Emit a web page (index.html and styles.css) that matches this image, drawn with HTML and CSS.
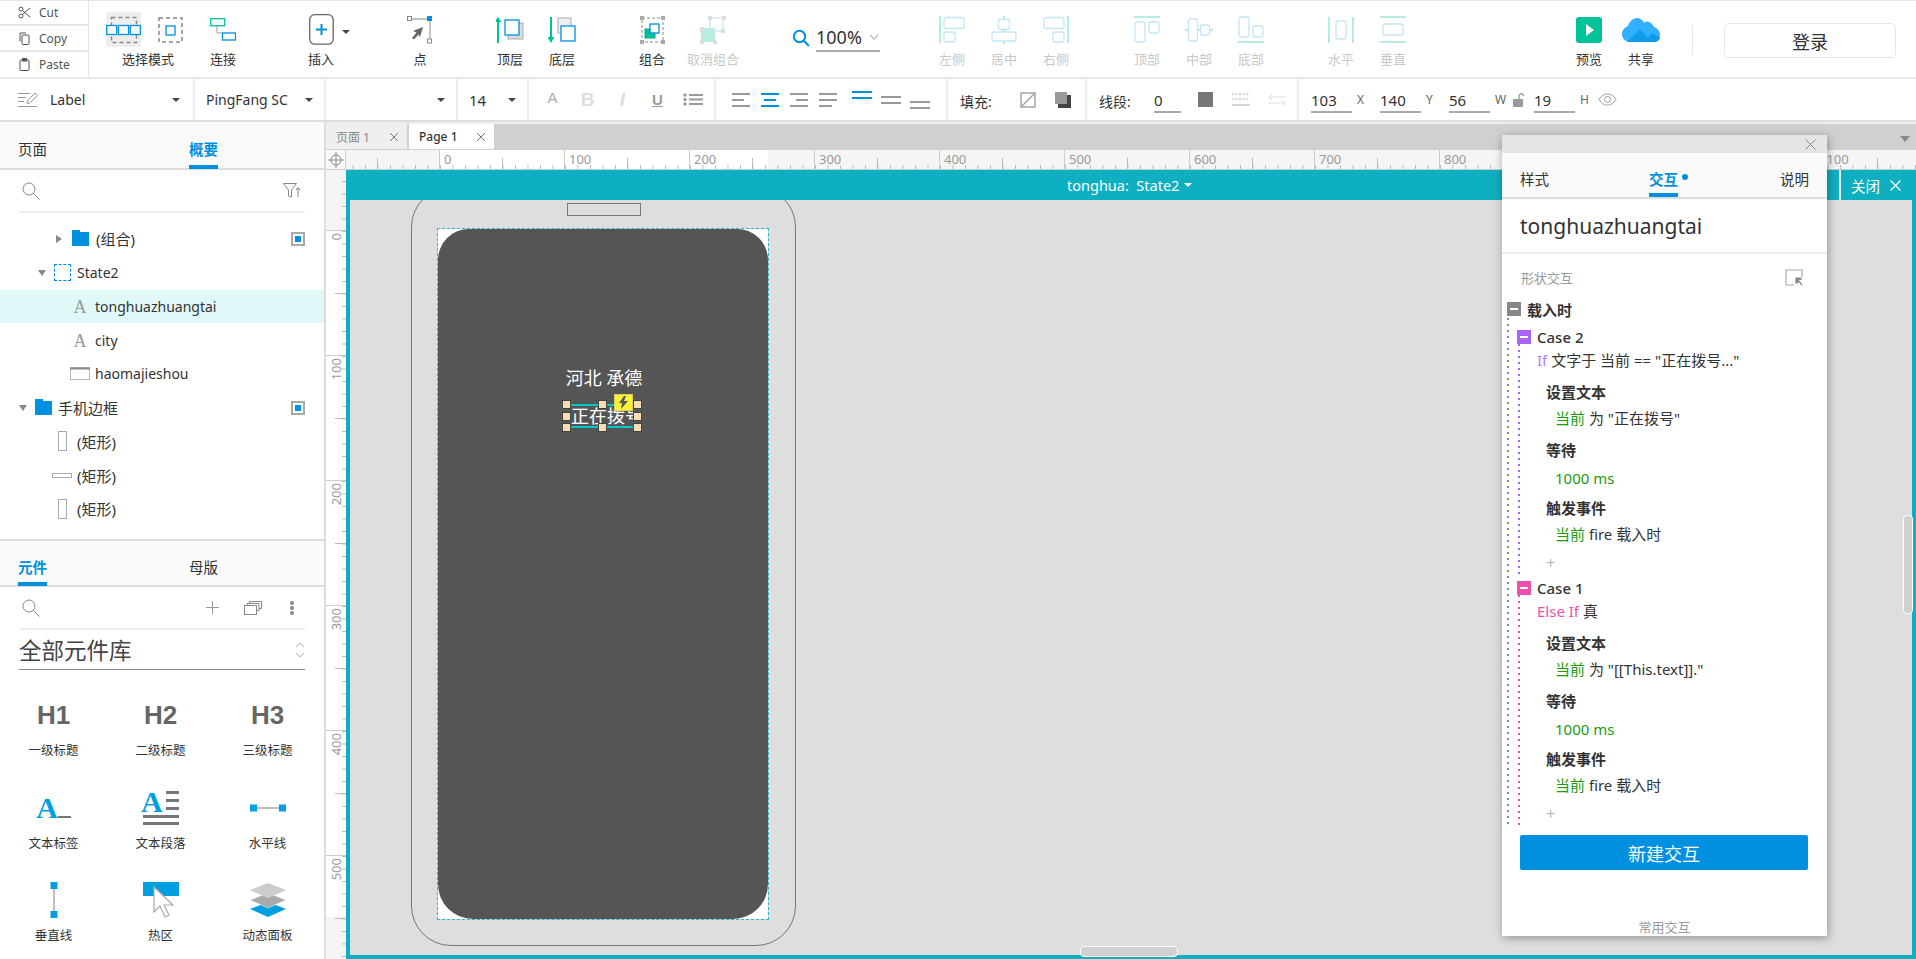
FILE: index.html
```html
<!DOCTYPE html>
<html lang="zh-CN">
<head>
    <meta charset="UTF-8">
    <title>Axure</title>
    <link rel="stylesheet" href="styles.css">
</head>
<body>
    <header class="topbar">
        <div class="clip">
            <div class="clip-row">
                <svg width="13" height="13" viewBox="0 0 13 13" fill="none" stroke="#555"><circle cx="3" cy="3" r="2"/><circle cx="3" cy="10" r="2"/><path d="M4.500 4.500L12 11M4.500 8.500L12 2"/></svg>
                <span>Cut</span>
            </div>
            <div class="clip-row">
                <svg width="13" height="13" viewBox="0 0 13 13" fill="none" stroke="#555"><rect x="4" y="3" width="7" height="9.500" rx="1"/><path d="M2 9.500V1h6"/></svg>
                <span>Copy</span>
            </div>
            <div class="clip-row">
                <svg width="13" height="13" viewBox="0 0 13 13" fill="none" stroke="#555"><rect x="2" y="2" width="9" height="10.500" rx="1"/><rect x="4.500" y="0.500" width="4" height="2.500" fill="#555"/></svg>
                <span>Paste</span>
            </div>
        </div>

        <div class="tool tool-select">
            <div class="tool-icon select-icons">
                <span class="select-on">
                    <svg width="35" height="35" viewBox="0 0 35 35" fill="none"><rect x="5.500" y="5.500" width="25" height="25" stroke="#888" stroke-width="1.500" stroke-dasharray="4 3"/><g fill="#fff" stroke="#0090e0" stroke-width="1.300"><rect x="0.700" y="13.500" width="10" height="9"/><rect x="12.500" y="13.500" width="10" height="9"/><rect x="24.300" y="13.500" width="10" height="9"/></g></svg>
                </span>
                <svg width="25" height="26" viewBox="0 0 25 26" fill="none"><rect x="1" y="1" width="23" height="24" stroke="#888" stroke-width="1.500" stroke-dasharray="4 3"/><rect x="8" y="9" width="9" height="9" stroke="#0090e0" stroke-width="1.300"/></svg>
            </div>
            <span class="tool-label">选择模式</span>
        </div>
        <div class="tool">
            <div class="tool-icon">
                <svg width="26" height="23" viewBox="0 0 26 23" fill="none"><path d="M7 8v7h6" stroke="#999"/><rect x="0.700" y="0.700" width="14" height="7" stroke="#00c39a" stroke-width="1.300"/><rect x="12.500" y="15" width="13" height="7" stroke="#0090e0" stroke-width="1.300"/></svg>
            </div>
            <span class="tool-label">连接</span>
        </div>
        <div class="tool gap-46">
            <div class="tool-icon insert-icon">
                <svg width="25" height="31" viewBox="0 0 25 31" fill="none"><rect x="0.700" y="0.700" width="23.500" height="29.500" rx="5" stroke="#666" stroke-width="1.300"/><path d="M12.500 10v11M7 15.500h11" stroke="#0090e0" stroke-width="2"/></svg>
                <i class="caret insert-caret"></i>
            </div>
            <span class="tool-label">插入</span>
        </div>
        <div class="tool gap-47">
            <div class="tool-icon">
                <svg width="26" height="28" viewBox="0 0 26 28" fill="none"><path d="M3 3h20v22" stroke="#888"/><rect x="0.500" y="0.500" width="4" height="4" fill="#fff" stroke="#888"/><rect x="20" y="0" width="5" height="5" fill="#0090e0"/><rect x="20.500" y="23" width="4" height="4" fill="#fff" stroke="#888"/><path d="M16 11l-10 4 3.500 1.500L5 22l2 1.500 4.500-5L13 21z" fill="#666"/></svg>
            </div>
            <span class="tool-label">点</span>
        </div>
        <div class="tool gap-38">
            <div class="tool-icon">
                <svg width="28" height="26" viewBox="0 0 28 26" fill="none"><path d="M2 26V4" stroke="#00c39a" stroke-width="2"/><path d="M2 0l3.500 5h-7z" fill="#00c39a"/><rect x="12" y="6" width="15" height="16" fill="#ddd" stroke="#aaa"/><rect x="9" y="3" width="14" height="15" fill="#fff" stroke="#0090e0" stroke-width="1.300"/></svg>
            </div>
            <span class="tool-label">顶层</span>
        </div>
        <div class="tool">
            <div class="tool-icon">
                <svg width="28" height="26" viewBox="0 0 28 26" fill="none"><path d="M3 0v20" stroke="#00c39a" stroke-width="2"/><path d="M3 26l3.500-6h-7z" fill="#00c39a"/><rect x="10" y="1" width="13" height="15" fill="#eee" stroke="#aaa"/><rect x="13" y="9" width="14" height="15" fill="#fff" stroke="#0090e0" stroke-width="1.300"/></svg>
            </div>
            <span class="tool-label">底层</span>
        </div>
        <div class="tool gap-38">
            <div class="tool-icon">
                <svg width="25" height="28" viewBox="0 0 25 28" fill="none"><rect x="2" y="2" width="21" height="24" stroke="#888" stroke-dasharray="3 2"/><g fill="#aaa"><rect x="0" y="0" width="4" height="4"/><rect x="21" y="0" width="4" height="4"/><rect x="0" y="24" width="4" height="4"/><rect x="21" y="24" width="4" height="4"/></g><rect x="5" y="13" width="10" height="9" fill="#00c39a" stroke="#0a8"/><rect x="10" y="8" width="9" height="9" fill="#fff" stroke="#0090e0" stroke-width="1.300"/></svg>
            </div>
            <span class="tool-label">组合</span>
        </div>
        <div class="tool tool-wide">
            <div class="tool-icon">
                <svg width="26" height="28" viewBox="0 0 26 28" fill="none"><rect x="1" y="12" width="14" height="14" fill="#b9ece0"/><rect x="10" y="2" width="13" height="13" stroke="#c5e6f8" stroke-width="1.300"/><g fill="#ddd"><rect x="8" y="0" width="4" height="4"/><rect x="22" y="0" width="4" height="4"/><rect x="0" y="11" width="4" height="4"/><rect x="21" y="13" width="4" height="4"/><rect x="0" y="24" width="4" height="4"/><rect x="13" y="24" width="4" height="4"/></g></svg>
            </div>
            <span class="tool-label tool-off">取消组合</span>
        </div>
        <div class="zoom-box">
            <svg width="18" height="18" viewBox="0 0 18 18" fill="none" stroke="#0090e0" stroke-width="2"><circle cx="7.500" cy="7.500" r="5.700"/><path d="M11.500 11.500l5.500 5.500"/></svg>
            <div class="zoom-val">
                <span>100%</span>
                <svg width="10" height="6" viewBox="0 0 10 6" fill="none" stroke="#bbb" stroke-width="1.300"><path d="M1 1l4 4 4-4"/></svg>
            </div>
        </div>
        <div class="tool gap-46">
            <div class="tool-icon"><svg width="26" height="27" viewBox="0 0 26 27" fill="none"><path d="M1 0v27" stroke="#b9ece0" stroke-width="2"/><g stroke="#c5e6f8" stroke-width="1.300"><rect x="5" y="1.500" width="20" height="11" rx="2"/><rect x="5" y="16" width="11" height="10" rx="2"/></g></svg></div>
            <span class="tool-label tool-off">左侧</span>
        </div>
        <div class="tool">
            <div class="tool-icon"><svg width="26" height="28" viewBox="0 0 26 28" fill="none"><path d="M13 0v28" stroke="#b9ece0" stroke-width="2"/><g fill="#fff" stroke="#c5e6f8" stroke-width="1.300"><rect x="7.500" y="3.500" width="11" height="10" rx="2"/><rect x="1" y="16" width="24" height="9" rx="2"/></g></svg></div>
            <span class="tool-label tool-off">居中</span>
        </div>
        <div class="tool">
            <div class="tool-icon"><svg width="26" height="27" viewBox="0 0 26 27" fill="none"><path d="M25 0v27" stroke="#b9ece0" stroke-width="2"/><g stroke="#c5e6f8" stroke-width="1.300"><rect x="1" y="1.500" width="20" height="11" rx="2"/><rect x="10" y="16" width="11" height="10" rx="2"/></g></svg></div>
            <span class="tool-label tool-off">右侧</span>
        </div>
        <div class="tool gap-39">
            <div class="tool-icon"><svg width="26" height="27" viewBox="0 0 26 27" fill="none"><path d="M0 1h26" stroke="#b9ece0" stroke-width="2"/><g stroke="#c5e6f8" stroke-width="1.300"><rect x="1" y="6" width="10" height="20" rx="2"/><rect x="15" y="6" width="10" height="11" rx="2"/></g></svg></div>
            <span class="tool-label tool-off">顶部</span>
        </div>
        <div class="tool">
            <div class="tool-icon"><svg width="28" height="26" viewBox="0 0 28 26" fill="none"><path d="M0 13h28" stroke="#b9ece0" stroke-width="2"/><g fill="#fff" stroke="#c5e6f8" stroke-width="1.300"><rect x="3.500" y="2" width="9" height="22" rx="2"/><rect x="15.500" y="8" width="9" height="10" rx="2"/></g></svg></div>
            <span class="tool-label tool-off">中部</span>
        </div>
        <div class="tool">
            <div class="tool-icon"><svg width="26" height="27" viewBox="0 0 26 27" fill="none"><path d="M0 26h26" stroke="#b9ece0" stroke-width="2"/><g stroke="#c5e6f8" stroke-width="1.300"><rect x="1" y="1" width="10" height="20" rx="2"/><rect x="15" y="10" width="10" height="11" rx="2"/></g></svg></div>
            <span class="tool-label tool-off">底部</span>
        </div>
        <div class="tool gap-38">
            <div class="tool-icon"><svg width="26" height="26" viewBox="0 0 26 26" fill="none"><path d="M1 0v26M25 0v26" stroke="#b9ece0" stroke-width="2"/><rect x="8" y="4" width="10" height="18" rx="2" stroke="#c5e6f8" stroke-width="1.300"/></svg></div>
            <span class="tool-label tool-off">水平</span>
        </div>
        <div class="tool">
            <div class="tool-icon"><svg width="26" height="27" viewBox="0 0 26 27" fill="none"><path d="M0 1h26M0 26h26" stroke="#b9ece0" stroke-width="2"/><rect x="3" y="8" width="20" height="11" rx="2" stroke="#c5e6f8" stroke-width="1.300"/></svg></div>
            <span class="tool-label tool-off">垂直</span>
        </div>
        <div class="tool gap-144">
            <div class="tool-icon"><svg width="26" height="26" viewBox="0 0 26 26"><rect width="26" height="26" rx="3" fill="#00c39a"/><path d="M10 7l8 6-8 6z" fill="#fff"/></svg></div>
            <span class="tool-label">预览</span>
        </div>
        <div class="tool">
            <div class="tool-icon"><svg width="38" height="26" viewBox="0 0 38 26"><path d="M8 25C3 25 0 21 0 17c0-4 3-7 6-8 1-4 5-8 9-8 3 0 6 2 7 5 1-1 3-2 5-1 3 1 4 3 5 5 3 1 6 4 6 7 0 5-4 8-8 8z" fill="#30b0ff"/><path d="M5 25l13-13 12 13z" fill="#0e9be8"/><path d="M22 25l8-9 8 4c0 3-3 5-6 5z" fill="#0e9be8"/></svg></div>
            <span class="tool-label">共享</span>
        </div>
        <div class="top-sep"></div>
        <button class="login">登录</button>
    </header>

    <div class="formatbar">
        <div class="fmt fmt-type">
            <svg width="20" height="16" viewBox="0 0 20 16" fill="none" stroke="#999"><path d="M0 1.500h12M0 5.500h8M0 9.500h6M0 14.500h19"/><path d="M9 12l1-4 7-7 2.500 2.500-7 7z"/></svg>
            <span class="fmt-text">Label</span>
            <i class="caret"></i>
        </div>
        <div class="fmt fmt-font">
            <span>PingFang SC</span>
            <i class="caret"></i>
        </div>
        <div class="fmt fmt-weight"><i class="caret"></i></div>
        <div class="fmt fmt-size">
            <span>14</span>
            <i class="caret"></i>
        </div>
        <div class="fmt fmt-style">
            <span class="st st-a">A</span>
            <span class="st st-b">B</span>
            <span class="st st-i">I</span>
            <span class="st st-u">U</span>
            <span class="st">
                <svg width="20" height="13" viewBox="0 0 20 13" fill="#999"><circle cx="2" cy="2" r="1.700"/><circle cx="2" cy="6.500" r="1.700"/><circle cx="2" cy="11" r="1.700"/><rect x="6" y="1" width="14" height="2"/><rect x="6" y="5.500" width="14" height="2"/><rect x="6" y="10" width="14" height="2"/></svg>
            </span>
        </div>
        <div class="fmt fmt-align">
            <span class="al"><svg width="18" height="14" viewBox="0 0 18 14" fill="#999"><rect width="18" height="2"/><rect y="6" width="12" height="2"/><rect y="12" width="18" height="2"/></svg></span>
            <span class="al"><svg width="18" height="14" viewBox="0 0 18 14" fill="#0090e0"><rect width="18" height="2"/><rect x="3" y="6" width="12" height="2"/><rect y="12" width="18" height="2"/></svg></span>
            <span class="al"><svg width="18" height="14" viewBox="0 0 18 14" fill="#999"><rect width="18" height="2"/><rect x="6" y="6" width="12" height="2"/><rect y="12" width="18" height="2"/></svg></span>
            <span class="al"><svg width="18" height="14" viewBox="0 0 18 14" fill="#999"><rect width="18" height="2"/><rect y="6" width="18" height="2"/><rect y="12" width="13" height="2"/></svg></span>
            <span class="al al-first al-up"><svg width="20" height="8" viewBox="0 0 20 8" fill="#0090e0"><rect width="20" height="2"/><rect y="6" width="20" height="2"/></svg></span>
            <span class="al"><svg width="20" height="8" viewBox="0 0 20 8" fill="#999"><rect width="20" height="2"/><rect y="6" width="20" height="2"/></svg></span>
            <span class="al al-down"><svg width="20" height="8" viewBox="0 0 20 8" fill="#999"><rect width="20" height="2"/><rect y="6" width="20" height="2"/></svg></span>
        </div>
        <div class="fmt fmt-fill">
            <span class="fmt-name">填充:</span>
            <svg class="fill-swatch" width="16" height="16" viewBox="0 0 16 16" fill="none" stroke="#999" stroke-width="1.300"><rect x="1" y="1" width="14" height="14"/><path d="M1 15L15 1"/></svg>
            <svg class="fill-shadow" width="16" height="16" viewBox="0 0 16 16"><rect x="3" y="3" width="13" height="13" fill="#444"/><rect width="12" height="12" fill="#999"/></svg>
        </div>
        <div class="fmt fmt-line">
            <span class="fmt-name">线段:</span>
            <span class="num num-line">0</span>
            <span class="line-color"></span>
            <svg class="line-style" width="18" height="14" viewBox="0 0 18 14" fill="none" stroke="#aaa"><path d="M0 1h18M0 6h18" stroke-dasharray="2 1.500"/><path d="M0 12h18"/></svg>
            <svg class="line-arrow" width="18" height="14" viewBox="0 0 18 14" fill="none" stroke="#ddd"><path d="M18 4H1M4 1L1 4l3 3M0 10h17M14 7l3 3-3 3"/></svg>
        </div>
        <div class="fmt fmt-geo">
            <span class="num">103</span><span class="axis">X</span>
            <span class="num">140</span><span class="axis">Y</span>
            <span class="num">56</span><span class="axis">W</span>
            <svg class="lock" width="12" height="14" viewBox="0 0 12 14"><rect x="0" y="6" width="10" height="8" rx="1" fill="#999"/><path d="M6 6V3a2.300 2.300 0 0 1 4.600 0" fill="none" stroke="#999" stroke-width="1.300"/></svg>
            <span class="num">19</span><span class="axis">H</span>
            <svg class="eye" width="19" height="13" viewBox="0 0 19 13" fill="none" stroke="#999"><path d="M1 6.500C4 2 6.500 1 9.500 1s5.500 1 8.500 5.500C15 11 12.500 12 9.500 12S4 11 1 6.500z"/><circle cx="9.500" cy="6.500" r="3"/></svg>
        </div>
    </div>

    <main class="main">
        <aside class="sidebar">
            <section class="outline">
                <div class="side-tabs">
                    <span class="side-tab">页面</span>
                    <span class="side-tab active">概要</span>
                </div>
                <div class="side-search">
                    <svg width="18" height="18" viewBox="0 0 18 18" fill="none" stroke="#888"><circle cx="7" cy="7" r="6"/><path d="M11.500 11.500l6 6"/></svg>
                    <svg class="side-filter" width="18" height="15" viewBox="0 0 18 15" fill="none" stroke="#888"><path d="M0.500 0.500h13l-5 6.500v7l-3-1V7z"/><path d="M15 14V5M13 7l2-2.500L17 7"/></svg>
                </div>
                <ul class="tree">
                    <li class="tree-row lv-group cn">
                        <i class="tri tri-right"></i>
                        <span class="folder"></span>
                        <span>(组合)</span>
                        <span class="pin"></span>
                    </li>
                    <li class="tree-row lv-state">
                        <i class="tri"></i>
                        <span class="state-box"></span>
                        <span>State2</span>
                    </li>
                    <li class="tree-row lv-leaf selected">
                        <span class="type-a">A</span>
                        <span>tonghuazhuangtai</span>
                    </li>
                    <li class="tree-row lv-leaf">
                        <span class="type-a">A</span>
                        <span>city</span>
                    </li>
                    <li class="tree-row lv-leaf">
                        <svg class="type-box" width="20" height="13" viewBox="0 0 20 13" fill="none" stroke="#bbb"><rect x="0.500" y="0.500" width="19" height="12"/><path d="M0 1.500h20" stroke="#888" stroke-width="2"/></svg>
                        <span>haomajieshou</span>
                    </li>
                    <li class="tree-row lv-top cn">
                        <i class="tri"></i>
                        <span class="folder"></span>
                        <span>手机边框</span>
                        <span class="pin"></span>
                    </li>
                    <li class="tree-row lv-rect cn">
                        <span class="rect-ic"><span class="rect-tall"></span></span>
                        <span>(矩形)</span>
                    </li>
                    <li class="tree-row lv-rect cn">
                        <span class="rect-ic"><span class="rect-flat"></span></span>
                        <span>(矩形)</span>
                    </li>
                    <li class="tree-row lv-rect cn">
                        <span class="rect-ic"><span class="rect-tall"></span></span>
                        <span>(矩形)</span>
                    </li>
                </ul>
            </section>

            <section class="library">
                <div class="side-tabs lib-tabs">
                    <span class="side-tab active">元件</span>
                    <span class="side-tab">母版</span>
                </div>
                <div class="side-search lib-search">
                    <svg width="18" height="18" viewBox="0 0 18 18" fill="none" stroke="#888"><circle cx="7" cy="7" r="6"/><path d="M11.500 11.500l6 6"/></svg>
                    <svg class="lib-plus" width="13" height="13" viewBox="0 0 13 13" stroke="#999"><path d="M6.500 0v13M0 6.500h13"/></svg>
                    <svg class="lib-copy" width="18" height="14" viewBox="0 0 18 14" fill="none" stroke="#888"><rect x="0.500" y="4.500" width="12" height="9"/><path d="M3 4.500V2.500h12v7h-2M5.500 2.500V0.500h12v7H15"/></svg>
                    <svg class="lib-more" width="4" height="14" viewBox="0 0 4 14" fill="#888"><circle cx="2" cy="2" r="2"/><circle cx="2" cy="7" r="2"/><circle cx="2" cy="12" r="2"/></svg>
                </div>
                <div class="lib-select">
                    <span>全部元件库</span>
                    <svg width="10" height="18" viewBox="0 0 10 18" fill="none" stroke="#ccc" stroke-width="1.300"><path d="M1 6l4-4 4 4M1 12l4 4 4-4"/></svg>
                </div>
                <div class="widgets">
                    <div class="widget">
                        <div class="widget-icon"><b class="hd">H1</b></div>
                        <span>一级标题</span>
                    </div>
                    <div class="widget">
                        <div class="widget-icon"><b class="hd">H2</b></div>
                        <span>二级标题</span>
                    </div>
                    <div class="widget">
                        <div class="widget-icon"><b class="hd">H3</b></div>
                        <span>三级标题</span>
                    </div>
                    <div class="widget">
                        <div class="widget-icon"><b class="serif-a">A</b><i class="a-under"></i></div>
                        <span>文本标签</span>
                    </div>
                    <div class="widget">
                        <div class="widget-icon para-icon">
                            <b class="serif-a">A</b>
                            <svg width="36" height="34" viewBox="0 0 36 34" fill="#777"><rect x="23" y="0" width="13" height="3"/><rect x="23" y="8" width="13" height="3"/><rect x="23" y="16" width="13" height="3"/><rect x="0" y="24" width="36" height="3"/><rect x="0" y="31" width="36" height="3"/></svg>
                        </div>
                        <span>文本段落</span>
                    </div>
                    <div class="widget">
                        <div class="widget-icon"><svg width="36" height="8" viewBox="0 0 36 8"><path d="M4 4h28" stroke="#aaa" stroke-width="1.500"/><rect width="7" height="7" y="0.500" fill="#00a0e0"/><rect x="29" y="0.500" width="7" height="7" fill="#00a0e0"/></svg></div>
                        <span>水平线</span>
                    </div>
                    <div class="widget">
                        <div class="widget-icon"><svg width="8" height="36" viewBox="0 0 8 36"><path d="M4 4v28" stroke="#aaa" stroke-width="1.500"/><rect x="0.500" width="7" height="7" fill="#00a0e0"/><rect x="0.500" y="29" width="7" height="7" fill="#00a0e0"/></svg></div>
                        <span>垂直线</span>
                    </div>
                    <div class="widget">
                        <div class="widget-icon"><svg width="36" height="36" viewBox="0 0 36 36"><rect width="36" height="14" fill="#00a0e0"/><path d="M11 5v25l6-6 5 11 4-2-5-10h9z" fill="#fff" stroke="#aaa" stroke-width="1.200"/></svg></div>
                        <span>热区</span>
                    </div>
                    <div class="widget">
                        <div class="widget-icon"><svg width="36" height="36" viewBox="0 0 36 36"><path d="M18 20l18 7-18 8-18-8z" fill="#00a0e0"/><path d="M18 11l18 7-18 8-18-8z" fill="#aaa" stroke="#fff" stroke-width="0.500"/><path d="M18 1l18 7-18 8-18-8z" fill="#ccc"/></svg></div>
                        <span>动态面板</span>
                    </div>
                </div>
            </section>
        </aside>

        <section class="workspace">
            <div class="doc-tabs">
                <div class="doc-tab">
                    <span>页面 1</span>
                    <svg width="10" height="10" viewBox="0 0 10 10" stroke="#777"><path d="M1 1l8 8M9 1l-8 8"/></svg>
                </div>
                <div class="doc-tab current">
                    <span>Page 1</span>
                    <svg width="10" height="10" viewBox="0 0 10 10" stroke="#777"><path d="M1 1l8 8M9 1l-8 8"/></svg>
                </div>
                <i class="tabs-menu"></i>
            </div>
            <div class="ruler-top">
                <div class="ruler-corner">
                    <svg width="16" height="16" viewBox="0 0 16 16" fill="none" stroke="#888"><circle cx="8" cy="8" r="5"/><path d="M8 0v16M0 8h16"/></svg>
                </div>
                <div class="h-ruler">
                    <span class="h-seg h-first"></span>
                    <span class="h-seg">0</span>
                    <span class="h-seg">100</span>
                    <span class="h-seg">200</span>
                    <span class="h-seg">300</span>
                    <span class="h-seg">400</span>
                    <span class="h-seg">500</span>
                    <span class="h-seg">600</span>
                    <span class="h-seg">700</span>
                    <span class="h-seg">800</span>
                    <span class="h-seg">900</span>
                    <span class="h-seg">1000</span>
                    <span class="h-seg">1100</span>
                </div>
            </div>
            <div class="stage-row">
                <div class="v-ruler">
                    <span class="v-seg v-first"></span>
                    <span class="v-seg"><em>0</em></span>
                    <span class="v-seg"><em>100</em></span>
                    <span class="v-seg"><em>200</em></span>
                    <span class="v-seg"><em>300</em></span>
                    <span class="v-seg"><em>400</em></span>
                    <span class="v-seg"><em>500</em></span>
                </div>
                <div class="stage">
                    <div class="stage-bar">
                        <span class="stage-title">tonghua:&nbsp; State2 <i class="caret caret-white"></i></span>
                        <span class="stage-close">
                            关闭
                            <svg width="11" height="11" viewBox="0 0 11 11" stroke="#fff" stroke-width="1.200"><path d="M0.500 0.500l10 10M10.500 0.500l-10 10"/></svg>
                        </span>
                    </div>
                    <div class="stage-body">
                        <div class="phone">
                            <div class="phone-speaker"></div>
                        </div>
                        <div class="screen">
                            <div class="screen-fill"></div>
                        </div>
                        <div class="city-text">河北 承德</div>
                        <div class="dial">
                            <div class="dial-text">正在拨号</div>
                            <i class="hd-dot h-tl"></i><i class="hd-dot h-tc"></i><i class="hd-dot h-tr"></i>
                            <i class="hd-dot h-ml"></i><i class="hd-dot h-mr"></i>
                            <i class="hd-dot h-bl"></i><i class="hd-dot h-bc"></i><i class="hd-dot h-br"></i>
                            <span class="bolt">
                                <svg width="9" height="13" viewBox="0 0 9 13"><path d="M5 0L0 7h3l-1 6 7-8H5l2-5z" fill="#555"/></svg>
                            </span>
                        </div>
                    </div>
                    <div class="scroll-v"></div>
                    <div class="scroll-h"></div>
                </div>
            </div>

            <div class="panel">
                <div class="panel-head">
                    <svg width="11" height="11" viewBox="0 0 11 11" stroke="#888"><path d="M0.500 0.500l10 10M10.500 0.500l-10 10"/></svg>
                </div>
                <div class="panel-tabs">
                    <span class="panel-tab">样式</span>
                    <span class="panel-tab active">交互<i class="dot"></i></span>
                    <span class="panel-tab">说明</span>
                </div>
                <div class="panel-name">tonghuazhuangtai</div>
                <div class="panel-sub">
                    <span>形状交互</span>
                    <svg width="18" height="18" viewBox="0 0 18 18" fill="none" stroke="#aaa" stroke-width="1.200"><path d="M17 8V1H1v15h8"/><path d="M12 10l5 6M11 9h5v1.500h-3.500V14H11z" stroke="#888" fill="#888"/></svg>
                </div>
                <div class="cases">
                    <div class="ev-row"><i class="box box-gray"></i>载入时</div>
                    <div class="case case-purple">
                        <div class="case-row"><i class="box box-purple"></i>Case 2</div>
                        <div class="cond-row"><span class="kw-if">If</span> 文字于 当前 == "正在拨号..."</div>
                        <div class="act">设置文本</div>
                        <div class="val val-cn"><span class="cur">当前</span> 为 "正在拨号"</div>
                        <div class="act">等待</div>
                        <div class="val"><span class="cur">1000 ms</span></div>
                        <div class="act">触发事件</div>
                        <div class="val val-cn"><span class="cur">当前</span> fire 载入时</div>
                        <div class="add-row">+</div>
                    </div>
                    <div class="case case-pink">
                        <div class="case-row"><i class="box box-pink"></i>Case 1</div>
                        <div class="cond-row"><span class="kw-else">Else If</span> 真</div>
                        <div class="act">设置文本</div>
                        <div class="val val-cn"><span class="cur">当前</span> 为 "[[This.text]]."</div>
                        <div class="act">等待</div>
                        <div class="val"><span class="cur">1000 ms</span></div>
                        <div class="act">触发事件</div>
                        <div class="val val-cn"><span class="cur">当前</span> fire 载入时</div>
                        <div class="add-row">+</div>
                    </div>
                </div>
                <button class="new-btn">新建交互</button>
                <div class="panel-foot">常用交互</div>
            </div>
        </section>
    </main>
</body>
</html>
```

FILE: styles.css
```css
* {
    margin: 0;
    padding: 0;
    box-sizing: border-box;
}
body {
    width: 100vw;
    height: 100vh;
    overflow: hidden;
    display: flex;
    flex-direction: column;
    background: #fff;
    color: #333;
    font-family: "Noto Sans", "Noto Sans CJK SC", sans-serif;
    font-size: 14px;
}
ul {
    list-style: none;
}
i, em {
    font-style: normal;
}
svg {
    display: block;
    flex-shrink: 0;
}
.caret {
    display: block;
    width: 0;
    height: 0;
    border-left: 4px solid transparent;
    border-right: 4px solid transparent;
    border-top: 4px solid #444;
}

/* top toolbar */
.topbar {
    height: 79px;
    flex-shrink: 0;
    display: flex;
    border-top: 1px solid #e6e6e6;
    border-bottom: 2px solid #e6e6e6;
}
.clip {
    width: 89px;
    display: flex;
    flex-direction: column;
    border-right: 1px solid #e6e6e6;
    font-size: 12px;
    color: #555;
}
.clip-row {
    height: 26px;
    flex-grow: 1;
    display: flex;
    align-items: center;
    gap: 8px;
    padding-left: 18px;
    border-bottom: 2px solid #e6e6e6;
}
.clip-row:last-child {
    border-bottom: none;
}
.tool {
    width: 52px;
    display: flex;
    flex-direction: column;
    align-items: center;
    padding-top: 11px;
    flex-shrink: 0;
}
.tool-icon {
    height: 35px;
    display: flex;
    align-items: center;
    justify-content: center;
}
.tool-label {
    margin-top: 4px;
    font-size: 13px;
    line-height: 16px;
    white-space: nowrap;
}
.tool-off {
    color: #c8c8c8;
}
.tool-select {
    width: 84px;
    margin-left: 17px;
    margin-right: 7px;
}
.select-icons {
    width: 84px;
    justify-content: flex-start;
    gap: 17px;
}
.select-on {
    display: block;
    background: #eee;
}
.insert-icon {
    position: relative;
}
.insert-caret {
    position: absolute;
    left: 33px;
    top: 18px;
}
.tool-wide {
    width: 60px;
    margin-left: 5px;
}
.gap-38 { margin-left: 38px; }
.gap-39 { margin-left: 39px; }
.gap-46 { margin-left: 46px; }
.gap-47 { margin-left: 47px; }
.gap-144 { margin-left: 144px; }
.zoom-box {
    width: 88px;
    margin-left: 49px;
    height: 58px;
    display: flex;
    align-items: center;
    gap: 6px;
    padding-top: 16px;
}
.zoom-val {
    width: 64px;
    height: 28px;
    display: flex;
    align-items: center;
    justify-content: space-between;
    border-bottom: 2px solid #aaa;
    font-size: 18px;
    padding-right: 1px;
}
.top-sep {
    width: 1px;
    height: 30px;
    margin: 24px 0 0 25px;
    background: #e6e6e6;
}
.login {
    width: 172px;
    height: 35px;
    margin: 22px 0 0 31px;
    background: #fff;
    border: 1px solid #e6e6e6;
    border-radius: 5px;
    font-family: inherit;
    font-size: 18px;
    color: #333;
}

/* format bar */
.formatbar {
    height: 43px;
    flex-shrink: 0;
    display: flex;
    border-bottom: 2px solid #ddd;
}
.fmt {
    display: flex;
    align-items: center;
    border-right: 2px solid #eee;
    flex-shrink: 0;
}
.fmt .caret {
    margin-left: auto;
}
.fmt-type {
    width: 195px;
    padding: 0 13px 0 18px;
}
.fmt-text {
    margin-left: 12px;
}
.fmt-font {
    width: 131px;
    padding: 0 11px;
}
.fmt-weight {
    width: 132px;
    padding: 0 11px;
}
.fmt-size {
    width: 71px;
    padding: 0 11px;
    font-size: 15px;
}
.fmt-style {
    width: 187px;
    padding-left: 6px;
}
.st {
    width: 35px;
    display: flex;
    justify-content: center;
    font-size: 19px;
    font-family: "Liberation Sans", sans-serif;
    color: #ddd;
    line-height: 20px;
}
.st-a {
    color: #aaa;
    font-size: 15px;
    margin-top: -3px;
}
.st-b {
    font-weight: bold;
}
.st-i {
    font-weight: bold;
    font-style: italic;
}
.st-u {
    color: #999;
    font-weight: bold;
    font-size: 15px;
    text-decoration: underline;
}
.fmt-align {
    width: 232px;
    padding-left: 10px;
}
.al {
    width: 29px;
    display: flex;
    justify-content: center;
}
.al-first {
    margin-left: 5px;
}
.al-up {
    margin-top: -10px;
}
.al-down {
    margin-top: 10px;
}
.fmt-fill {
    width: 139px;
    padding-left: 12px;
}
.fmt-name {
    width: 36px;
    padding-top: 2px;
}
.fill-swatch {
    margin-left: 24px;
}
.fill-shadow {
    margin-left: 19px;
}
.fmt-line {
    width: 212px;
    padding-left: 12px;
}
.num {
    width: 41px;
    height: 23px;
    margin-top: 3px;
    border-bottom: 2px solid #aaa;
    font-size: 15px;
    line-height: 20px;
}
.num-line {
    width: 27px;
    margin-left: 19px;
}
.line-color {
    width: 15px;
    height: 15px;
    margin-left: 17px;
    background: #777;
}
.line-style {
    margin-left: 19px;
}
.line-arrow {
    margin-left: 18px;
}
.fmt-geo {
    padding-left: 12px;
    border-right: none;
}
.axis {
    width: 28px;
    padding-left: 5px;
    font-size: 12px;
    color: #666;
}
.lock {
    margin: 0 9px 0 -5px;
}
.eye {
    margin-left: -5px;
}

.main {
    flex-grow: 1;
    display: flex;
    min-height: 0;
}

/* left column */
.sidebar {
    width: 326px;
    flex-shrink: 0;
    border-right: 2px solid #ddd;
    display: flex;
    flex-direction: column;
}
.outline {
    height: 419px;
    flex-shrink: 0;
    border-bottom: 2px solid #ddd;
}
.side-tabs {
    height: 48px;
    display: flex;
    padding-left: 18px;
    background: #fafafa;
    border-bottom: 2px solid #ddd;
    font-size: 14.500px;
}
.side-tab {
    width: 29px;
    margin-right: 142px;
    height: 47px;
    line-height: 54px;
    white-space: nowrap;
}
.side-tab.active {
    color: #0090e0;
    font-weight: bold;
    border-bottom: 4px solid #0090e0;
}
.side-search {
    height: 43px;
    margin: 0 19px;
    display: flex;
    align-items: center;
    padding-left: 3px;
    border-bottom: 2px solid #eee;
}
.side-filter {
    margin-left: auto;
    margin-right: 4px;
}
.tree {
    margin-top: 9px;
}
.tree-row {
    height: 33.750px;
    display: flex;
    align-items: center;
    gap: 6px;
    padding-right: 19px;
    white-space: nowrap;
}
.tree-row.cn {
    font-size: 15px;
}
.lv-group { padding-left: 56px; }
.lv-state { padding-left: 38px; }
.lv-leaf { padding-left: 71px; }
.lv-top { padding-left: 19px; }
.lv-rect { padding-left: 51px; }
.selected {
    background: #e0f9f8;
}
.tri {
    width: 0;
    height: 0;
    margin-right: 2px;
    border-left: 4px solid transparent;
    border-right: 4px solid transparent;
    border-top: 6px solid #888;
}
.tri-right {
    margin-right: 4px;
    border-top: 4px solid transparent;
    border-bottom: 4px solid transparent;
    border-left: 6px solid #888;
    border-right: none;
}
.folder {
    width: 17px;
    height: 14px;
    background: #0090e0;
    border-top: 2px solid #0090e0;
    position: relative;
}
.folder::before {
    content: "";
    position: absolute;
    left: 0;
    top: -4px;
    width: 8px;
    height: 3px;
    background: #0090e0;
}
.lv-group .folder {
    margin-right: 1px;
}
.pin {
    width: 14px;
    height: 14px;
    margin-left: auto;
    border: 2px solid #aaa;
    background: #fff;
    position: relative;
}
.pin::after {
    content: "";
    position: absolute;
    left: 2px;
    top: 2px;
    width: 6px;
    height: 6px;
    background: #0090e0;
}
.state-box {
    width: 17px;
    height: 17px;
    border: 1px dashed #0090e0;
}
.type-a {
    width: 18px;
    text-align: center;
    font-family: "Liberation Serif", serif;
    font-size: 18px;
    color: #999;
    line-height: 18px;
    padding-top: 2px;
}
.type-box {
    margin-left: -1px;
    margin-right: -1px;
}
.rect-ic {
    width: 22px;
    display: flex;
    justify-content: center;
    margin-right: -2px;
}
.rect-tall {
    width: 9px;
    height: 20px;
    border: 1.500px solid #aaa;
}
.rect-flat {
    width: 20px;
    height: 5px;
    border: 1.500px solid #aaa;
}

.library {
    flex-grow: 1;
    min-height: 0;
}
.lib-tabs {
    height: 46px;
}
.lib-tabs .side-tab {
    height: 45px;
    line-height: 52px;
}
.lib-search {
    height: 43px;
    position: relative;
    border-bottom: 2px solid #eee;
}
.lib-plus {
    margin-left: auto;
    margin-right: 25px;
}
.lib-copy {
    margin-right: 28px;
}
.lib-more {
    margin-right: 11px;
}
.lib-select {
    height: 40px;
    margin: 0 19px;
    padding-top: 3px;
    display: flex;
    align-items: center;
    justify-content: space-between;
    border-bottom: 1.500px solid #888;
    font-size: 22.500px;
    line-height: 30px;
    color: #444;
}
.lib-select svg {
    margin-top: -3px;
}
.widgets {
    display: grid;
    grid-template-columns: repeat(3, 107px);
    grid-auto-rows: 92.500px;
    margin-top: 26px;
}
.widget {
    display: flex;
    flex-direction: column;
    align-items: center;
    font-size: 12.500px;
    white-space: nowrap;
}
.widget-icon {
    height: 38px;
    margin-bottom: 6px;
    display: flex;
    align-items: center;
    justify-content: center;
    position: relative;
    width: 100%;
}
.hd {
    font-family: "Liberation Sans", sans-serif;
    font-size: 26px;
    color: #666;
}
.serif-a {
    font-family: "Liberation Serif", serif;
    font-weight: bold;
    font-size: 30px;
    color: #00a0e0;
    line-height: 28px;
}
.a-under {
    width: 13px;
    height: 2px;
    background: #777;
    margin-top: 18px;
}
.para-icon .serif-a {
    position: absolute;
    left: 34px;
    top: -1px;
}

/* workspace */
.workspace {
    flex-grow: 1;
    min-width: 0;
    position: relative;
    display: flex;
    flex-direction: column;
}
.doc-tabs {
    height: 28px;
    flex-shrink: 0;
    display: flex;
    align-items: flex-end;
    gap: 2px;
    background: #d0d0d0;
    border-top: 2px solid #eee;
    padding-bottom: 1px;
    position: relative;
    font-size: 12px;
}
.doc-tab {
    width: 81px;
    height: 25px;
    display: flex;
    align-items: center;
    justify-content: space-between;
    padding: 0 8px 0 10px;
    background: #efefef;
    color: #888;
}
.doc-tab.current {
    width: 85px;
    background: #fff;
    color: #333;
    font-weight: 500;
}
.tabs-menu {
    position: absolute;
    right: 6px;
    top: 12px;
    width: 0;
    height: 0;
    border-left: 5px solid transparent;
    border-right: 5px solid transparent;
    border-top: 6px solid #888;
}
.ruler-top {
    height: 20px;
    flex-shrink: 0;
    display: flex;
    border-bottom: 1px solid #ccc;
}
.ruler-corner {
    width: 20px;
    flex-shrink: 0;
    display: flex;
    align-items: center;
    justify-content: center;
    background: #fafafa;
    border-right: 1px solid #ccc;
}
.h-ruler {
    flex-grow: 1;
    display: flex;
    overflow: hidden;
    background: linear-gradient(to right, #f5f5f5 93px, #fff 93px, #fff 422px, #f5f5f5 422px);
}
.h-seg {
    width: 125px;
    flex-shrink: 0;
    padding-left: 4px;
    border-left: 1px solid #ccc;
    font-size: 13px;
    line-height: 19px;
    color: #999;
    background-image:
        linear-gradient(to right, #bbb 1px, transparent 1px),
        linear-gradient(to right, #bbb 1px, transparent 1px);
    background-repeat: repeat-x, repeat-x;
    background-size: 12.500px 4px, 125px 11px;
    background-position: 0 100%, 62px 100%;
}
.h-first {
    margin-left: -32px;
}
.stage-row {
    flex-grow: 1;
    min-height: 0;
    display: flex;
}
.v-ruler {
    width: 20px;
    flex-shrink: 0;
    overflow: hidden;
    background: linear-gradient(to bottom, #f5f5f5 60px, #fff 60px, #fff 747px, #f5f5f5 747px);
}
.v-seg {
    display: block;
    height: 125px;
    border-top: 1px solid #ccc;
    padding-top: 2px;
    background-image:
        linear-gradient(to bottom, #bbb 1px, transparent 1px),
        linear-gradient(to bottom, #bbb 1px, transparent 1px);
    background-repeat: repeat-y, repeat-y;
    background-size: 4px 12.500px, 11px 125px;
    background-position: 100% 0, 100% 62px;
}
.v-seg em {
    display: block;
    writing-mode: vertical-rl;
    transform: rotate(180deg);
    font-size: 13px;
    line-height: 20px;
    color: #999;
}
.v-first {
    margin-top: -65px;
}

/* canvas */
.stage {
    flex-grow: 1;
    min-width: 0;
    display: flex;
    flex-direction: column;
    position: relative;
    border: solid #0fafc2;
    border-width: 0 4px 4px 4px;
    background: #dedede;
}
.stage-bar {
    height: 30px;
    flex-shrink: 0;
    margin: 0 -4px;
    background: #0fafc2;
    position: relative;
    display: flex;
    align-items: center;
    justify-content: flex-end;
    color: #fff;
    font-size: 14.500px;
}
.stage-title {
    position: absolute;
    left: 721px;
    display: flex;
    align-items: center;
    gap: 5px;
}
.caret-white {
    border-top-color: #fff;
}
.stage-close {
    width: 77px;
    height: 30px;
    display: flex;
    align-items: center;
    gap: 10px;
    padding-left: 10px;
    border-left: 2px solid #e6f6f8;
}
.stage-body {
    flex-grow: 1;
    min-height: 0;
    position: relative;
    overflow: hidden;
}
.phone {
    position: absolute;
    left: 61px;
    top: -13px;
    width: 385px;
    height: 759px;
    border: 1px solid #777;
    border-radius: 40px;
}
.phone-speaker {
    position: absolute;
    left: 155px;
    top: 15px;
    width: 74px;
    height: 13px;
    border: 1.500px solid #777;
}
.screen {
    position: absolute;
    left: 88px;
    top: 29px;
    width: 330px;
    height: 690px;
    background: #fff;
    outline: 1px dashed #2bb8c8;
}
.screen-fill {
    height: 100%;
    background: #555;
    border-radius: 31px 31px 35px 35px;
}
.city-text {
    position: absolute;
    left: 214px;
    top: 165px;
    width: 80px;
    text-align: center;
    color: #fff;
    font-size: 18px;
    line-height: 26px;
    white-space: nowrap;
}
.dial {
    position: absolute;
    left: 217px;
    top: 204px;
    width: 71px;
    height: 24px;
    border-top: 2px solid #00c8c8;
    border-bottom: 2px solid #00c8c8;
}
.dial-text {
    width: 62px;
    margin-left: 4px;
    overflow: hidden;
    white-space: nowrap;
    color: #fff;
    font-size: 18px;
    line-height: 20px;
}
.hd-dot {
    position: absolute;
    width: 9px;
    height: 9px;
    background: #fcdcb4;
    border: 1px solid #444;
}
.h-tl { left: -5px; top: -6px; }
.h-tc { left: 31px; top: -6px; }
.h-tr { left: 66px; top: -6px; }
.h-ml { left: -5px; top: 6px; }
.h-mr { left: 66px; top: 6px; }
.h-bl { left: -5px; top: 17px; }
.h-bc { left: 31px; top: 17px; }
.h-br { left: 66px; top: 17px; }
.bolt {
    position: absolute;
    left: 47px;
    top: -12px;
    width: 19px;
    height: 17px;
    background: #f8f23c;
    border: 1px solid #d8d050;
    display: flex;
    align-items: center;
    justify-content: center;
}
.scroll-v {
    position: absolute;
    right: -1px;
    top: 345px;
    width: 10px;
    height: 99px;
    background: #d0d0d0;
    border: 1px solid #fff;
    border-radius: 4px;
}
.scroll-h {
    position: absolute;
    left: 730px;
    bottom: -2px;
    width: 98px;
    height: 11px;
    background: #d0d0d0;
    border: 1px solid #fff;
    border-radius: 4px;
}

/* interaction panel */
.panel {
    position: absolute;
    left: 1176px;
    top: 13px;
    width: 325px;
    height: 801px;
    background: #fff;
    box-shadow: 1px 2px 9px rgba(0, 0, 0, 0.35);
    display: flex;
    flex-direction: column;
}
.panel-head {
    height: 18px;
    flex-shrink: 0;
    background: #e5e5e5;
    display: flex;
    align-items: center;
    justify-content: flex-end;
    padding-right: 11px;
}
.panel-tabs {
    height: 46px;
    flex-shrink: 0;
    display: flex;
    justify-content: space-between;
    padding: 0 18px;
    background: #fafafa;
    border-bottom: 2px solid #ddd;
    font-size: 14.500px;
}
.panel-tab {
    height: 44px;
    line-height: 52px;
    white-space: nowrap;
}
.panel-tab.active {
    color: #0090e0;
    font-weight: bold;
    width: 29px;
    border-bottom: 4px solid #0090e0;
    position: relative;
    margin-left: -2px;
}
.dot {
    position: absolute;
    left: 33px;
    top: 21px;
    width: 6px;
    height: 6px;
    border-radius: 50%;
    background: #0090e0;
}
.panel-name {
    height: 55px;
    flex-shrink: 0;
    padding-left: 18px;
    font-size: 21px;
    line-height: 55px;
    border-bottom: 2px solid #eee;
}
.panel-sub {
    height: 41px;
    flex-shrink: 0;
    display: flex;
    align-items: center;
    justify-content: space-between;
    padding: 6px 24px 0 19px;
    font-size: 13px;
    color: #999;
}
.cases {
    height: 531px;
    flex-shrink: 0;
    padding-left: 5px;
    position: relative;
    font-size: 15px;
}
.cases::before {
    content: "";
    position: absolute;
    left: 5px;
    top: 23px;
    width: 1.500px;
    height: 508px;
    background: linear-gradient(#888 2px, transparent 2px) 0 0 / 2px 6px;
}
.ev-row {
    height: 28px;
    display: flex;
    align-items: center;
    gap: 6px;
    font-weight: bold;
    margin-bottom: 2px;
}
.box {
    width: 14px;
    height: 14px;
    position: relative;
    flex-shrink: 0;
}
.box::after {
    content: "";
    position: absolute;
    left: 3px;
    top: 6px;
    width: 8px;
    height: 2px;
    background: #fff;
}
.box-gray { background: #888; }
.box-purple { background: #a963f7; }
.box-pink { background: #ec4fae; }
.case {
    position: relative;
    padding-left: 10px;
}
.case::before {
    content: "";
    position: absolute;
    left: 11px;
    top: 19px;
    bottom: 0;
    width: 1.500px;
    background: linear-gradient(#a963f7 2px, transparent 2px) 0 0 / 2px 6px;
}
.case-pink::before {
    background-image: linear-gradient(#ec4fae 2px, transparent 2px);
}
.case-row {
    height: 24px;
    display: flex;
    align-items: center;
    gap: 6px;
    font-weight: 500;
}
.cond-row {
    height: 23px;
    line-height: 23px;
    padding-left: 20px;
    margin-bottom: 6px;
    white-space: nowrap;
}
.kw-if { color: #b57bff; }
.kw-else { color: #ec4fae; }
.act {
    height: 28px;
    line-height: 28px;
    margin-top: 2px;
    padding-left: 29px;
    font-weight: bold;
}
.val {
    height: 28px;
    line-height: 28px;
    padding-left: 38px;
    white-space: nowrap;
}
.val-cn {
    line-height: 25px;
}
.cur {
    color: #1a9c10;
}
.add-row {
    height: 26px;
    padding-left: 29px;
    line-height: 26px;
    font-size: 16px;
    color: #bbb;
}
.new-btn {
    width: 288px;
    height: 35px;
    margin: 9px 0 0 18px;
    flex-shrink: 0;
    background: #0090e0;
    border: none;
    border-radius: 2px;
    color: #fff;
    font-family: inherit;
    font-size: 18px;
}
.panel-foot {
    margin-top: auto;
    text-align: center;
    font-size: 13px;
    line-height: 18px;
    color: #999;
}
```
